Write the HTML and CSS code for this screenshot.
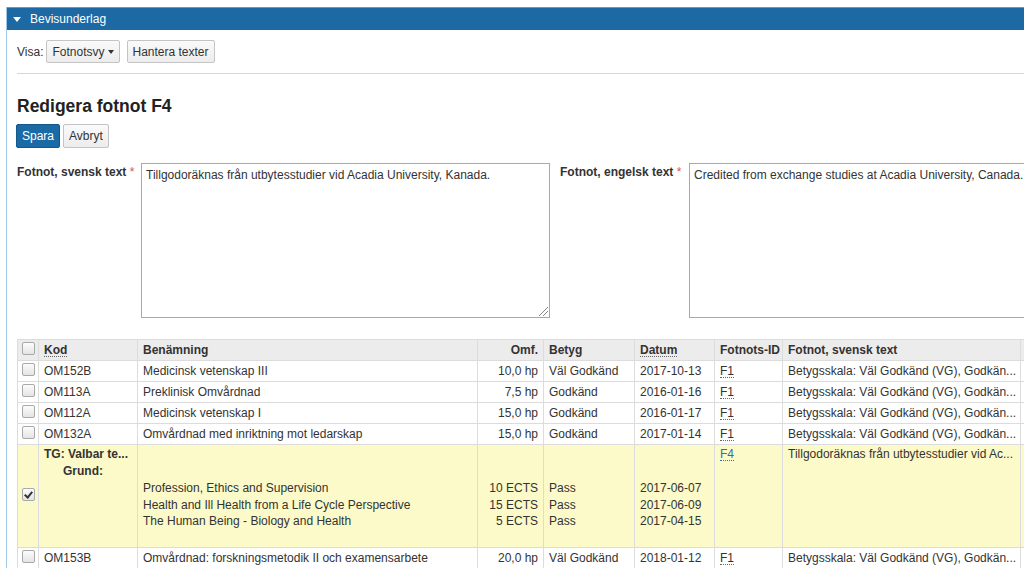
FILE: index.html
```html
<!DOCTYPE html>
<html lang="sv">
<head>
<meta charset="utf-8">
<link rel="stylesheet" href="styles.css">
</head>
<body>
<div class="panel">
  <div class="panel-head"><span class="tri"></span>Bevisunderlag</div>
  <div class="panel-body">
    <div class="toolbar">
      <span class="visa">Visa:</span>
      <button class="btn">Fotnotsvy <span class="caret"></span></button>
      <button class="btn">Hantera texter</button>
    </div>
    <h2 class="title">Redigera fotnot F4</h2>
    <div class="actions">
      <button class="btn btn-primary">Spara</button>
      <button class="btn">Avbryt</button>
    </div>
    <div class="fields">
      <label class="lbl lbl-sv">Fotnot, svensk text <span class="req">*</span></label>
      <div class="ta ta-sv">Tillgodoräknas från utbytesstudier vid Acadia University, Kanada.<span class="grip"></span></div>
      <label class="lbl lbl-en">Fotnot, engelsk text <span class="req">*</span></label>
      <div class="ta ta-en">Credited from exchange studies at Acadia University, Canada.</div>
    </div>
    <table class="grid">
      <colgroup>
        <col style="width:21px"><col style="width:99px"><col style="width:340px"><col style="width:66px"><col style="width:91px"><col style="width:80px"><col style="width:68px"><col style="width:238px"><col style="width:60px">
      </colgroup>
      <thead>
        <tr>
          <th class="cb"><span class="chk"></span></th>
          <th><span class="sort">Kod</span></th>
          <th>Benämning</th>
          <th class="r">Omf.</th>
          <th>Betyg</th>
          <th><span class="sort">Datum</span></th>
          <th>Fotnots-ID</th>
          <th>Fotnot, svensk text</th>
          <th></th>
        </tr>
      </thead>
      <tbody>
        <tr>
          <td class="cb"><span class="chk"></span></td><td>OM152B</td><td>Medicinsk vetenskap III</td><td class="r">10,0 hp</td><td>Väl Godkänd</td><td>2017-10-13</td><td><span class="fid">F1</span></td><td>Betygsskala: Väl Godkänd (VG), Godkän...</td><td></td>
        </tr>
        <tr>
          <td class="cb"><span class="chk"></span></td><td>OM113A</td><td>Preklinisk Omvårdnad</td><td class="r">7,5 hp</td><td>Godkänd</td><td>2016-01-16</td><td><span class="fid">F1</span></td><td>Betygsskala: Väl Godkänd (VG), Godkän...</td><td></td>
        </tr>
        <tr>
          <td class="cb"><span class="chk"></span></td><td>OM112A</td><td>Medicinsk vetenskap I</td><td class="r">15,0 hp</td><td>Godkänd</td><td>2016-01-17</td><td><span class="fid">F1</span></td><td>Betygsskala: Väl Godkänd (VG), Godkän...</td><td></td>
        </tr>
        <tr>
          <td class="cb"><span class="chk"></span></td><td>OM132A</td><td>Omvårdnad med inriktning mot ledarskap</td><td class="r">15,0 hp</td><td>Godkänd</td><td>2017-01-14</td><td><span class="fid">F1</span></td><td>Betygsskala: Väl Godkänd (VG), Godkän...</td><td></td>
        </tr>
        <tr class="sel">
          <td class="cb mid"><span class="chk on"></span></td>
          <td class="top"><div class="tg">TG: Valbar te...</div><div class="grund">Grund:</div></td>
          <td class="list"><div>Profession, Ethics and Supervision</div><div>Health and Ill Health from a Life Cycle Perspective</div><div>The Human Being - Biology and Health</div></td>
          <td class="list r"><div>10 ECTS</div><div>15 ECTS</div><div>5 ECTS</div></td>
          <td class="list"><div>Pass</div><div>Pass</div><div>Pass</div></td>
          <td class="list"><div>2017-06-07</div><div>2017-06-09</div><div>2017-04-15</div></td>
          <td class="top"><span class="fid link">F4</span></td>
          <td class="top">Tillgodoräknas från utbytesstudier vid Ac...</td>
          <td></td>
        </tr>
        <tr>
          <td class="cb"><span class="chk"></span></td><td>OM153B</td><td>Omvårdnad: forskningsmetodik II och examensarbete</td><td class="r">20,0 hp</td><td>Väl Godkänd</td><td>2018-01-12</td><td><span class="fid">F1</span></td><td>Betygsskala: Väl Godkänd (VG), Godkän...</td><td></td>
        </tr>
      </tbody>
    </table>
  </div>
</div>
</body>
</html>
```
FILE: styles.css
```css
html, body {
  margin: 0;
  padding: 0;
  background: #fff;
  overflow: hidden;
  width: 1024px;
  height: 568px;
}
body {
  font-family: "Liberation Sans", Arial, sans-serif;
  font-size: 12px;
  color: #333;
}
.panel {
  margin: 7px 0 0 6px;
  width: 1100px;
  border-left: 1px solid #9cc7e6;
}
.panel-head {
  background: #1d69a3;
  color: #fff;
  height: 23px;
  line-height: 23px;
  font-size: 12px;
  padding-left: 6px;
  display: flex;
  align-items: center;
  border-top: 1px solid #5b9bd0;
  box-sizing: border-box;
}
.tri {
  width: 0;
  height: 0;
  border-left: 4px solid transparent;
  border-right: 4px solid transparent;
  border-top: 5px solid #fff;
  margin-right: 9px;
  margin-top: 1px;
}
.panel-body {
  padding: 10px 0 0 10px;
}
.toolbar {
  display: flex;
  align-items: center;
  gap: 7px;
  height: 23px;
  padding-bottom: 10px;
  border-bottom: 1px solid #d6d6d6;
}
.visa { margin-right: -4px; }
.btn {
  font-family: "Liberation Sans", Arial, sans-serif;
  font-size: 12px;
  color: #333;
  height: 23px;
  padding: 0 5px;
  border: 1px solid #c4c4c4;
  border-radius: 2px;
  background: linear-gradient(#fafafa, #ececec);
  display: inline-flex;
  align-items: center;
  box-sizing: border-box;
}
.caret {
  display: inline-block;
  width: 0;
  height: 0;
  border-left: 3px solid transparent;
  border-right: 3px solid transparent;
  border-top: 4px solid #333;
  margin-left: 3px;
}
.title {
  font-size: 17.5px;
  font-weight: bold;
  margin: 21px 0 0 0;
  line-height: 22px;
  color: #222;
}
.actions {
  display: flex;
  gap: 3px;
  margin-top: 7px;
  margin-left: -1px;
}
.actions .btn { height: 24px; }
.btn-primary {
  background: #1a6aa6;
  border-color: #15598c;
  color: #fff;
}
.fields {
  display: flex;
  align-items: flex-start;
  margin-top: 15px;
}
.lbl {
  font-weight: bold;
  padding-top: 2px;
}
.req { color: #d9534f; font-weight: normal; }
.lbl-sv { width: 124px; }
.lbl-en { width: 129px; margin-left: 10px; }
.ta {
  position: relative;
  border: 1px solid #a9a9a9;
  height: 155px;
  box-sizing: border-box;
  padding: 4px 4px;
  line-height: 14px;
  background: #fff;
}
.ta-sv { width: 409px; }
.ta-en { width: 400px; }
.grip {
  position: absolute;
  right: 1px;
  bottom: 1px;
  width: 9px;
  height: 9px;
  background: linear-gradient(135deg, transparent 45%, #888 45%, #888 52%, transparent 52%, transparent 68%, #888 68%, #888 75%, transparent 75%);
}
.grid {
  margin-top: 21px;
  border-collapse: collapse;
  table-layout: fixed;
  width: 1063px;
}
.grid th, .grid td {
  border: 1px solid #dcdcdc;
  height: 21px;
  padding: 0 5px;
  text-align: left;
  white-space: nowrap;
  overflow: hidden;
  vertical-align: middle;
  line-height: 14px;
  box-sizing: border-box;
}
.grid th {
  background: #ececec;
  font-weight: bold;
}
.grid .cb {
  padding: 0;
  text-align: center;
}
.grid .r { text-align: right; }
.chk {
  display: inline-block;
  width: 11px;
  height: 11px;
  border: 1px solid #a9a9a9;
  border-radius: 2px;
  background: linear-gradient(#fcfcfc, #e4e4e4);
  vertical-align: middle;
  position: relative;
  top: -2px;
}
.chk.on::after {
  content: "";
  position: absolute;
  left: 3px;
  top: 1px;
  width: 3px;
  height: 6px;
  border: solid #333;
  border-width: 0 2px 2px 0;
  transform: rotate(40deg);
}
.sort, .fid {
  border-bottom: 1px dotted #666;
  line-height: 12px;
  display: inline-block;
}
.fid.link { color: #2a6fbf; border-bottom-color: #2a6fbf; }
.sel td { background: #fcfac8; height: auto; }
.grid .top { vertical-align: top; padding-top: 2px; }
.grid .list { vertical-align: top; padding-top: 35px; padding-bottom: 17px; line-height: 16.5px; }
.tg { font-weight: bold; }
.grund { font-weight: bold; padding-left: 19px; margin-top: 3px; }
```
